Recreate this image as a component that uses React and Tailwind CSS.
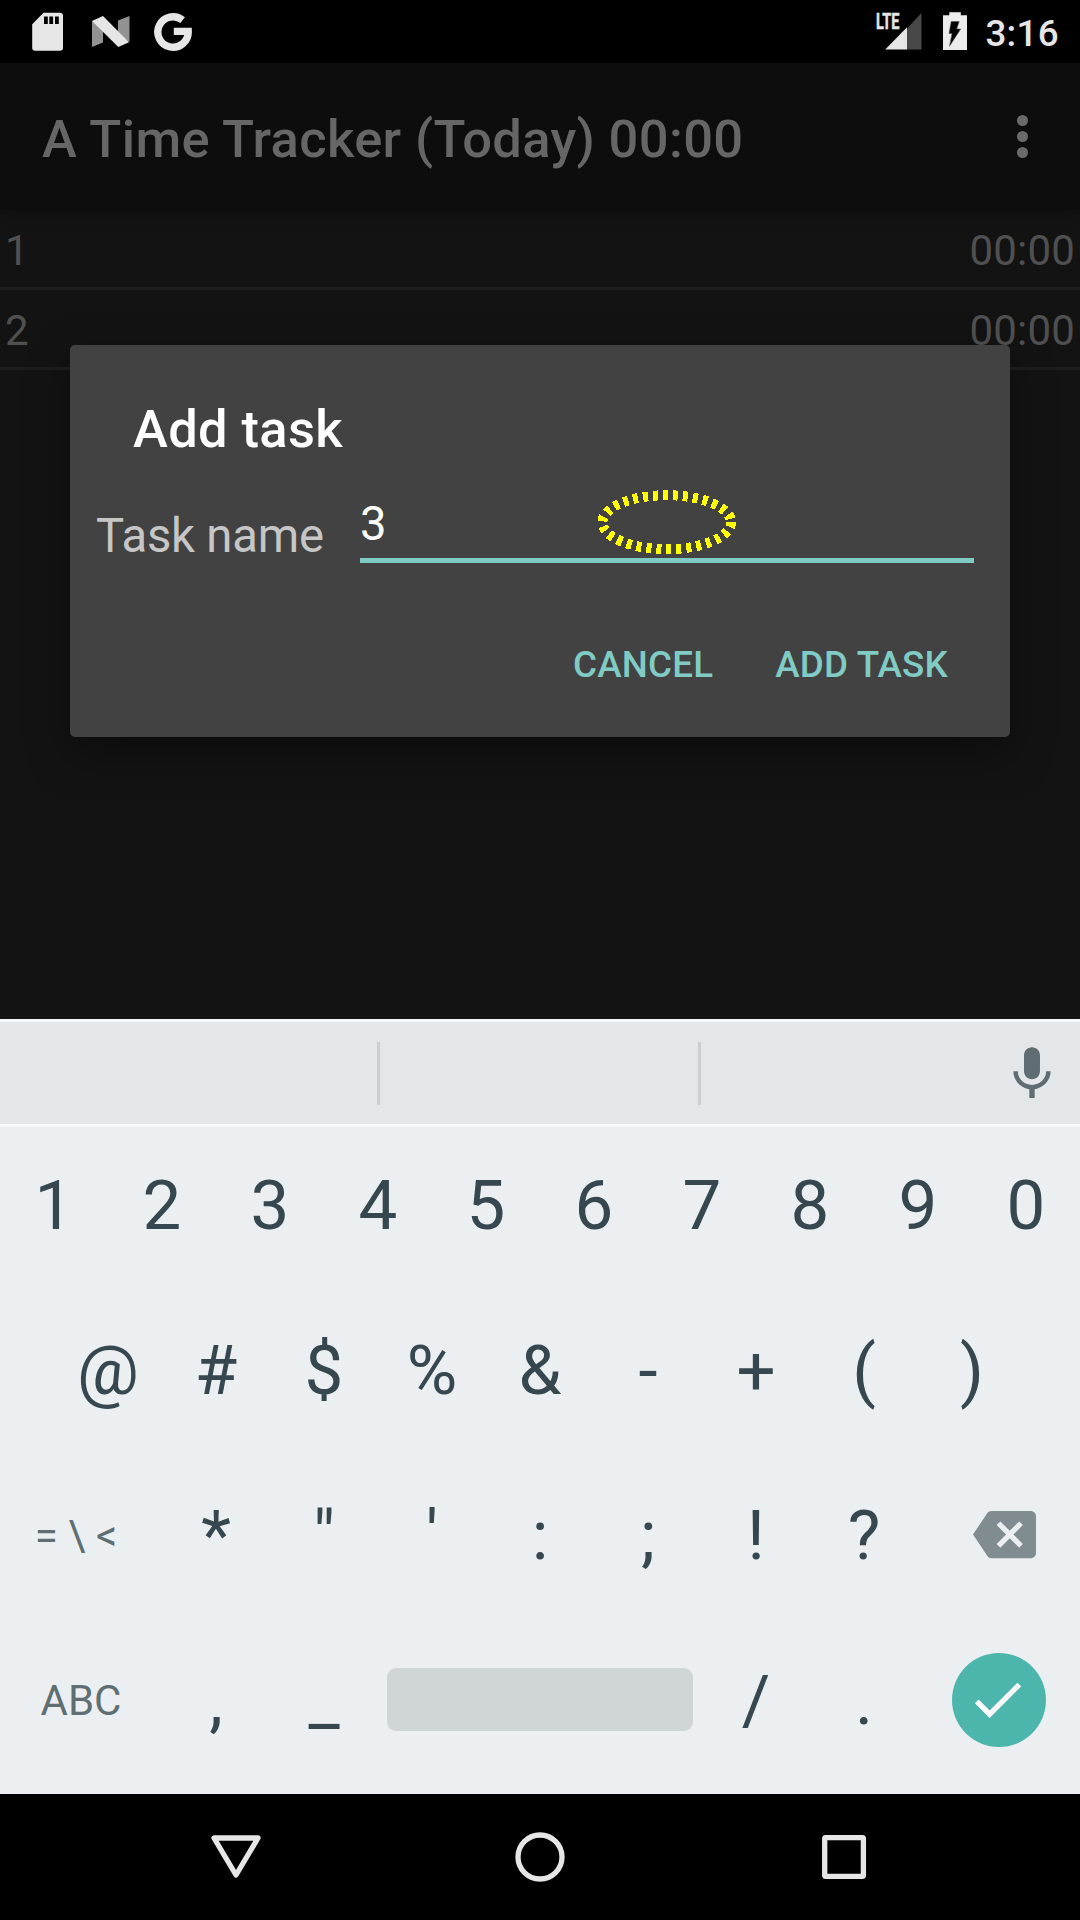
const tasks = [
  { name: "1", time: "00:00" },
  { name: "2", time: "00:00" },
];

function StatusBar() {
  return (
    <div className="flex h-[63px] items-start justify-between bg-black pl-8 pr-[21px] text-[#e6e6e6]">
      <div className="flex">
        <svg className="mt-3 h-10 w-8" viewBox="0 0 32 40" fill="#e6e6e6">
          <path
            fillRule="evenodd"
            d="M11.5.8H28c1.8 0 3 1.200 3 3V36c0 1.700-1.200 2.700-3 2.700H3.200C1.400 38.700.2 37.700.2 36V12.200zM12 4.500v7.500h3.800V4.500zM17.300 4.500v7.500h3.800V4.500zM23 4.500v7.500h3.800V4.500z"
          />
        </svg>
        <svg className="ml-[27px] mt-3 h-10 w-10" viewBox="0 0 40 40">
          <path d="M1 9v26l11-4.500V14z" fill="#929292" />
          <path d="M27 8.500 38.500 4v26L27 23z" fill="#929292" />
          <path d="M1 9 12 4l26 26.200L27.300 35z" fill="#e6e6e6" />
        </svg>
        <svg className="ml-[22px] mt-3 h-10 w-10" viewBox="0 0 40 40" fill="none">
          <path d="M29.600 8.200A15.200 15.200 0 1 0 35.200 19.400H20.800" stroke="#e6e6e6" strokeWidth="7.400" />
        </svg>
      </div>
      <div className="flex">
        <svg className="mt-1 h-12 w-[46px] overflow-visible" viewBox="0 -8 46 48">
          <path d="M31 16.500 45.500 1v36.500H31z" fill="#484848" />
          <path d="M9.200 37.500 31 15.200v22.300z" fill="#e6e6e6" />
          <text
            x="0"
            y="17"
            transform="scale(.66 1)"
            fill="#e6e6e6"
            stroke="#e6e6e6"
            strokeWidth=".5"
            className="font-['Roboto',sans-serif] text-[22px] font-bold"
          >
            LTE
          </text>
        </svg>
        <svg className="ml-[21px] mt-3 h-10 w-6" viewBox="0 0 24 40">
          <path d="M6.300.3h11.500v3H24V38H0V3.300h6.300z" fill="#ececec" />
          <path d="M8.200 9.500h8L13.700 17h4L6.500 34.300 9 21.500H6z" fill="#000" stroke="#555" strokeWidth=".6" />
        </svg>
        <span className="ml-[18px] mt-1 text-[36.750px] font-medium leading-[60px] tracking-[0.3px]">3:16</span>
      </div>
    </div>
  );
}

function AppBar() {
  return (
    <div className="relative flex h-[147px] items-center justify-between bg-[#0d0d0d] pl-[42px] pr-[52px] shadow-[0_2px_12px_rgba(0,0,0,0.3)]">
      <h1 className="pt-[4px] text-[52.500px] font-medium leading-[60px] tracking-[0.340px] text-[#666666]">
        A Time Tracker (Today) 00:00
      </h1>
      <div className="flex flex-col gap-[5px]">
        <i className="size-[11px] rounded-full bg-[#6a6a6a]" />
        <i className="size-[11px] rounded-full bg-[#6a6a6a]" />
        <i className="size-[11px] rounded-full bg-[#6a6a6a]" />
      </div>
    </div>
  );
}

function TaskDialog() {
  return (
    <div className="absolute left-[70px] top-[345px] h-[392px] w-[940px] rounded-[5px] bg-[#424242] shadow-[0_16px_44px_rgba(0,0,0,0.35)]">
      <h2 className="ml-[63px] h-[115px] pt-[54px] text-[52.500px] font-medium leading-[60px] tracking-[0.350px] text-white">
        Add task
      </h2>
      <div className="flex h-[103px] pl-[26px] pr-9">
        <label className="w-[264px] pt-[46px] text-[47.250px] leading-[60px] tracking-[-0.200px] text-[#c6c6c6]">
          Task name
        </label>
        <div className="relative flex-1 border-b-[5px] border-[#80cbc4] pt-[34px] text-[47.250px] leading-[60px] text-white">
          3
          <svg className="absolute left-[235px] top-[28px] h-[70px] w-[144px]" viewBox="0 0 144 70" fill="none">
            <ellipse
              cx="71.700"
              cy="34.200"
              rx="64.300"
              ry="27"
              stroke="#ffff00"
              strokeWidth="10"
              strokeDasharray="5 5"
              shapeRendering="crispEdges"
            />
          </svg>
        </div>
      </div>
      <div className="mt-[72px] flex justify-end gap-[62px] pr-[62px] text-[36.750px] font-medium leading-[60px] tracking-[0.200px] text-[#80cbc4]">
        <button>CANCEL</button>
        <button>ADD TASK</button>
      </div>
    </div>
  );
}

function Key({ children }) {
  return <div className="flex w-[108px] items-center justify-center pt-[3px]">{children}</div>;
}

function Keys({ chars }) {
  return chars.split("").map((c) => <Key key={c}>{c}</Key>);
}

function Keyboard() {
  return (
    <div className="h-[775px] bg-[#eceff1]">
      <div className="flex h-[108px] items-center border-y-[3px] border-t-[#f5f6f7] border-b-[#f8f9fa] bg-[#e3e7ea]">
        <div className="ml-[377px] h-[63px] w-[3px] bg-[#cacfd2]" />
        <div className="ml-[318px] h-[63px] w-[3px] bg-[#cacfd2]" />
        <svg className="ml-[299px] mt-px size-16" viewBox="0 0 24 24" fill="#5f6c72">
          <path d="M12 14c1.660 0 2.990-1.340 2.990-3L15 5c0-1.660-1.340-3-3-3S9 3.340 9 5v6c0 1.660 1.340 3 3 3zm5.300-3c0 3-2.540 5.100-5.300 5.100S6.700 14 6.700 11H5c0 3.410 2.720 6.230 6 6.720V21h2v-3.280c3.280-.48 6-3.300 6-6.720h-1.700z" />
        </svg>
      </div>
      <div className="text-[69px] leading-[80px] text-[#37474f]">
        <div className="mb-[5px] flex h-[155px]">
          <Keys chars="1234567890" />
        </div>
        <div className="flex h-[165px] justify-center">
          <Keys chars="@#$%&-+()" />
        </div>
        <div className="flex h-[165px]">
          <div className="flex w-[162px] items-center justify-center pr-[10px] pt-[2px] text-[42px] text-[#5f6e73]">
            = \ &lt;
          </div>
          <Keys chars={"*\"':;!?"} />
          <div className="flex w-[162px] items-center justify-center pl-[11px]">
            <svg className="size-[63px]" viewBox="0 0 24 24" fill="#808c90">
              <path d="M22 3H7c-.69 0-1.230.35-1.590.88L0 12l5.410 8.110c.36.53.9.89 1.590.89h15c1.100 0 2-.9 2-2V5c0-1.100-.9-2-2-2zm-3 12.590L17.590 17 14 13.410 10.410 17 9 15.590 12.590 12 9 8.410 10.410 7 14 10.590 17.590 7 19 8.410 15.410 12 19 15.590z" />
            </svg>
          </div>
        </div>
        <div className="flex h-[165px] items-stretch">
          <div className="flex w-[162px] items-center justify-center pt-[2px] text-[42px] text-[#5f6e73]">ABC</div>
          <Keys chars=",_" />
          <div className="mx-[9px] h-[63px] w-[306px] self-center rounded-[9px] bg-[#d0d5d8]" />
          <Keys chars="/." />
          <div className="flex w-[162px] items-center justify-center pt-px">
            <div className="flex size-[94px] items-center justify-center rounded-full bg-[#4db6ac]">
              <svg className="mb-[2px] mr-[3px] size-[63px]" viewBox="0 0 24 24" fill="#fff">
                <path d="M9 16.200 4.800 12l-1.400 1.400L9 19 21 7l-1.400-1.400z" />
              </svg>
            </div>
          </div>
        </div>
      </div>
    </div>
  );
}

function NavBar() {
  return (
    <div className="flex h-[126px] items-center justify-center bg-black">
      {[
        <path key="back" d="M8 9.500h44L30 46.500z" transform="translate(0 1.500)" />,
        <circle key="home" cx="30" cy="30" r="22" />,
        <rect key="recent" x="10.700" y="10.600" width="38.700" height="38.700" rx="1" />,
      ].map((shape) => (
        <div key={shape.key} className="flex w-[304px] justify-center">
          <svg
            className="size-[60px]"
            viewBox="0 0 60 60"
            fill="none"
            stroke="#e6e6e6"
            strokeWidth="5.300"
            strokeLinejoin="round"
          >
            {shape}
          </svg>
        </div>
      ))}
    </div>
  );
}

export default function App() {
  return (
    <div className="relative flex h-[1920px] w-[1080px] flex-col overflow-hidden bg-[#131313] font-['Roboto',sans-serif]">
      <StatusBar />
      <AppBar />
      <div className="flex-1">
        {tasks.map((t) => (
          <div
            key={t.name}
            className="flex h-20 items-center justify-between border-b-[3px] border-[#1e1e1e] px-[5px] pt-1 text-[42px] leading-[60px] text-[#505050]"
          >
            <span>{t.name}</span>
            <span className="tracking-[0.200px]">{t.time}</span>
          </div>
        ))}
      </div>
      <Keyboard />
      <NavBar />
      <TaskDialog />
    </div>
  );
}
